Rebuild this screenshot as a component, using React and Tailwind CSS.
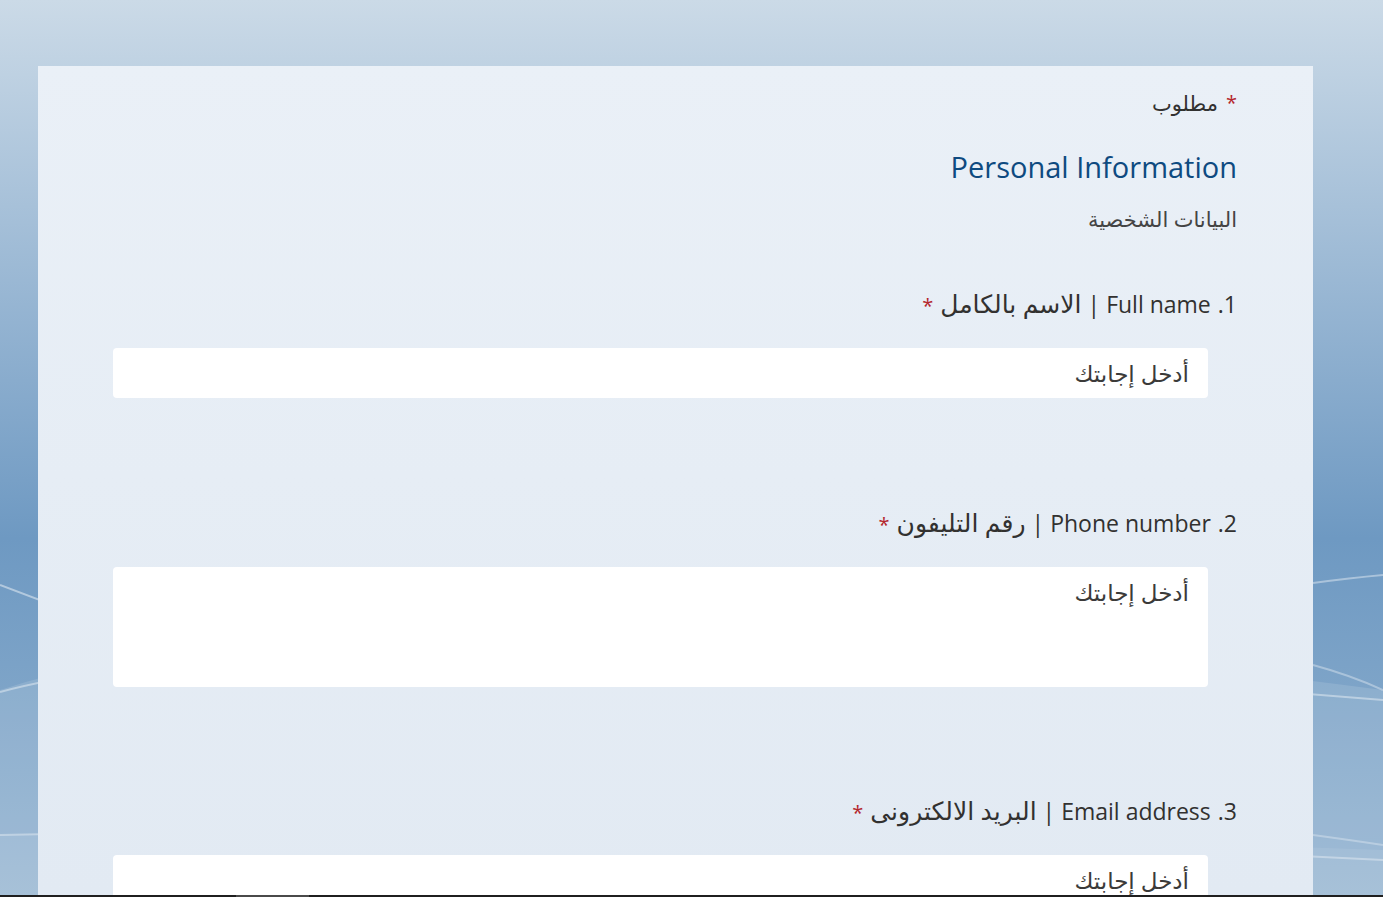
import React from "react";

const questions = [
  { n: "1.", en: "Full name", ar: "الاسم بالكامل", tall: false, gap: "mt-[56px]" },
  { n: "2.", en: "Phone number", ar: "رقم التليفون", tall: true, gap: "mt-[109px]" },
  { n: "3.", en: "Email address", ar: "البريد الالكترونى", tall: false, gap: "mt-[108px]" },
];

const Waves = () => (
  <svg
    className="absolute inset-0 w-full h-full"
    viewBox="0 0 1383 897"
    preserveAspectRatio="none"
  >
    <path d="M0 690 Q 400 560 1383 690 L1383 897 L0 897 Z" fill="#ffffff" fillOpacity="0.12" />
    <path d="M0 835 Q 500 820 1383 850 L1383 897 L0 897 Z" fill="#ffffff" fillOpacity="0.08" />
    <path d="M0 585 Q 300 700 700 820" stroke="#ffffff" strokeOpacity="0.45" strokeWidth="2" fill="none" />
    <path d="M0 692 Q 300 610 1383 700" stroke="#ffffff" strokeOpacity="0.4" strokeWidth="2" fill="none" />
    <path d="M0 835 Q 600 820 1383 860" stroke="#ffffff" strokeOpacity="0.35" strokeWidth="2" fill="none" />
    <path d="M1313 583 Q 1350 578 1383 575" stroke="#ffffff" strokeOpacity="0.4" strokeWidth="2" fill="none" />
    <path d="M1313 665 Q 1350 675 1383 690" stroke="#ffffff" strokeOpacity="0.35" strokeWidth="2" fill="none" />
    <path d="M1313 835 Q 1350 840 1383 845" stroke="#ffffff" strokeOpacity="0.3" strokeWidth="2" fill="none" />
  </svg>
);

export default function App() {
  return (
    <div
      className="relative h-[897px] overflow-hidden flex flex-col bg-gradient-to-b from-[#cbdae7] via-[#6e99c2] via-60% to-[#93b3d0]"
      style={{ fontFamily: '"Open Sans", "Noto Sans", "DejaVu Sans", sans-serif' }}
    >
      <Waves />
      <div
        dir="rtl"
        className="relative mt-[66px] ml-[38px] mr-[70px] flex-1 overflow-hidden bg-gradient-to-b from-[#eaf0f7] to-[#e2eaf3] pt-[24px] pr-[76px] pl-[75px] text-[#323130]"
      >
        <div className="flex gap-2 text-[21px] leading-[26px]">
          <span className="text-[#b4262c] text-[20px]">*</span>
          <span>مطلوب</span>
        </div>
        <h1 className="mt-[31px] text-[29px] leading-[40px] text-[#0e4a80]">
          Personal Information
        </h1>
        <p className="mt-[19px] text-[21px] leading-[26px] text-[#444]">البيانات الشخصية</p>

        {questions.map((q) => (
          <div key={q.n} className={q.gap}>
            <div className="flex h-[30px] items-baseline gap-[7px] text-[23px] leading-[30px]">
              <span>{q.n}</span>
              <span>
                {q.en} | <span className="text-[25px]">{q.ar}</span>
              </span>
              <span className="text-[#b4262c] text-[20px]">*</span>
            </div>
            <div className="mt-[30px] mr-[29px]">
              {q.tall ? (
                <textarea
                  placeholder="أدخل إجابتك"
                  className="block w-full h-[120px] resize-none rounded-[4px] bg-white px-[19px] py-[10px] text-[23px] leading-[30px] outline-none placeholder:text-[#3b3a39]"
                />
              ) : (
                <input
                  placeholder="أدخل إجابتك"
                  className="block w-full h-[50px] rounded-[4px] bg-white px-[19px] text-[23px] outline-none placeholder:text-[#3b3a39]"
                />
              )}
            </div>
          </div>
        ))}
      </div>
      <div className="relative h-[2px] bg-[#1f1f1f] flex">
        <div className="ml-[236px] w-[73px] bg-[#4a4a4a]" />
      </div>
    </div>
  );
}
